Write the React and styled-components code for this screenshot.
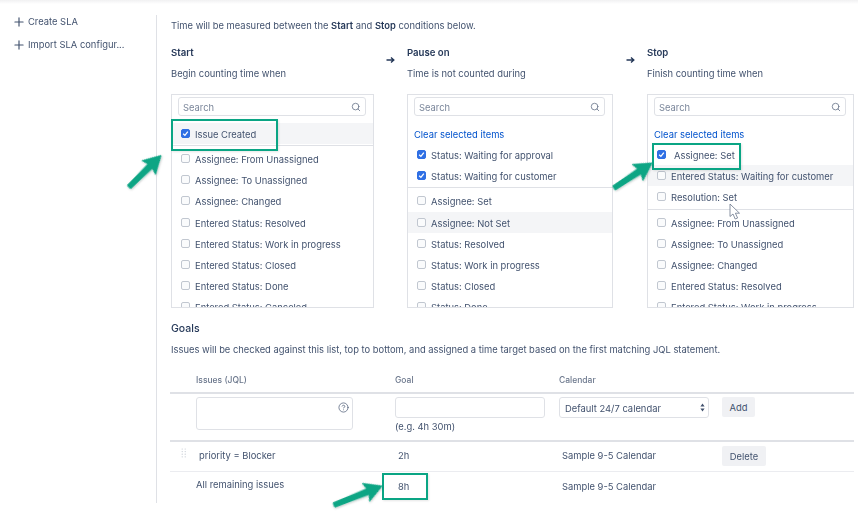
import React from 'react';
import styled, { createGlobalStyle } from 'styled-components';
import { Plus, Search, CircleHelp } from 'lucide-react';

const GlobalStyle = createGlobalStyle`
  html, body {
    margin: 0;
    padding: 0;
    background: #fff;
  }
  body {
    font-family: Inter, "Liberation Sans", sans-serif;
    font-size: 9.4px;
    color: #42526e;
    overflow: hidden;
  }
`;

const Page = styled.div`
  position: relative;
  display: flex;
  align-items: flex-start;
  width: 858px;
  height: 518px;
  padding-top: 10px;
  box-sizing: border-box;
  overflow: hidden;
  filter: blur(0.3px);
`;

const TopShade = styled.div`
  position: absolute;
  top: 0;
  left: 0;
  right: 0;
  height: 4px;
  background: linear-gradient(#f1f1f2, #fff);
`;

const Sidebar = styled.nav`
  flex: none;
  width: 156px;
  padding-left: 12px;
  box-sizing: border-box;
`;

const SideItem = styled.div`
  display: flex;
  align-items: center;
  gap: 2px;
  height: 23px;
  color: #42526e;
`;

const Main = styled.main`
  flex: none;
  width: 702px;
  height: 488px;
  margin-top: 5px;
  padding-left: 14px;
  box-sizing: border-box;
  border-left: 1px solid #dfe1e6;
`;

const Intro = styled.p`
  margin: 0;
  padding-top: 1px;
  line-height: 20px;
  strong {
    font-weight: 600;
    color: #253858;
  }
`;

const Columns = styled.div`
  display: flex;
  align-items: flex-start;
  margin-top: 10px;
`;

const Column = styled.section`
  flex: none;
  width: ${(p) => p.$width}px;
`;

const ArrowCell = styled.div`
  flex: none;
  display: flex;
  justify-content: center;
  width: ${(p) => p.$width}px;
  padding-top: 10px;
  color: #253858;
`;

const ColumnTitle = styled.h3`
  margin: 0;
  font-size: 9.6px;
  line-height: 14px;
  font-weight: 600;
  color: #253858;
`;

const ColumnText = styled.p`
  margin: 7px 0 13px;
  line-height: 14px;
`;

const ListBox = styled.div`
  height: 214px;
  box-sizing: border-box;
  border: 1px solid #dfe1e6;
  padding-top: 2px;
  overflow: hidden;
`;

const SearchBar = styled.div`
  display: flex;
  align-items: center;
  justify-content: space-between;
  height: 19px;
  margin: 0 7px 0 6px;
  padding: 0 4px 0 4px;
  box-sizing: border-box;
  border: 1px solid #dfe1e6;
  border-radius: 3px;
  color: #7a869a;
  background: #fff;
`;

// flex-centred text sits a pixel high at this font size
const InlineText = styled.span`
  padding-top: 2px;
  white-space: nowrap;
`;

const ClearLink = styled.a`
  display: block;
  margin: 12px 0 2px 6px;
  line-height: 14px;
  color: #0052cc;
`;

const SelectedGroup = styled.div`
  margin-top: ${(p) => p.$top || 0}px;
  padding-bottom: 1px;
  border-bottom: 1px solid #dfe1e6;
`;

const Options = styled.div`
  padding-top: 2px;
`;

const Option = styled.div`
  display: flex;
  align-items: center;
  height: ${(p) => p.$height || 21.2}px;
  padding-left: 9px;
  background: ${(p) => (p.$active ? '#f4f5f7' : 'transparent')};
`;

const Check = styled.span`
  flex: none;
  display: flex;
  align-items: center;
  justify-content: center;
  width: 9px;
  height: 9px;
  box-sizing: border-box;
  border-radius: 2px;
  border: 1px solid ${(p) => (p.$checked ? '#2f6fe4' : '#c1c7d0')};
  background: ${(p) => (p.$checked ? '#2f6fe4' : '#fafbfc')};
`;

const OptionLabel = styled(InlineText)`
  margin-left: ${(p) => (p.$indent ? 8 : 5)}px;
`;

const GoalsTitle = styled.h3`
  margin: 14px 0 0;
  font-size: 10.5px;
  line-height: 14px;
  font-weight: 500;
  color: #253858;
`;

const GoalsText = styled.p`
  margin: 7px 0 0;
  line-height: 14px;
`;

const Table = styled.div`
  margin: 15px 0 0 -1px;
  width: 684px;
`;

const Row = styled.div`
  display: grid;
  grid-template-columns: 26px 199px 164px 163px 1fr;
  align-items: start;
  height: ${(p) => p.$height}px;
  padding-top: ${(p) => p.$pad || 0}px;
  box-sizing: border-box;
  border-bottom: ${(p) => p.$line || 0}px solid ${(p) => (p.$line === 1 ? '#ebecf0' : '#dfe1e6')};
`;

const HeadCell = styled.div`
  padding-top: 1px;
  font-size: 8.5px;
  line-height: 14px;
  font-weight: 500;
  color: #6b778c;
  grid-column: ${(p) => p.$col};
`;

const Cell = styled.div`
  grid-column: ${(p) => p.$col};
  padding-left: ${(p) => p.$inset || 0}px;
  padding-top: ${(p) => p.$top || 0}px;
  line-height: 14px;
  color: #42526e;
  white-space: nowrap;
`;

const Handle = styled.div`
  display: flex;
  justify-content: center;
  padding: 2px 0 0 2px;
`;

const JqlField = styled.div`
  display: flex;
  justify-content: flex-end;
  width: 157px;
  height: 33px;
  padding: 4px 3px 0 0;
  box-sizing: border-box;
  border: 1px solid #dfe1e6;
  border-radius: 3px;
  color: #42526e;
`;

const GoalField = styled.div`
  width: 150px;
  height: 21px;
  box-sizing: border-box;
  border: 1px solid #dfe1e6;
  border-radius: 3px;
`;

const GoalHint = styled.div`
  padding-top: 1px;
  line-height: 15px;
`;

const CalendarSelect = styled.div`
  display: flex;
  align-items: center;
  justify-content: space-between;
  width: 150px;
  height: 21px;
  padding: 0 3px 0 5px;
  box-sizing: border-box;
  border: 1px solid #dfe1e6;
  border-radius: 3px;
  color: #42526e;
`;

const Button = styled.div`
  display: inline-flex;
  align-items: center;
  justify-content: center;
  width: ${(p) => p.$width}px;
  height: 20px;
  border-radius: 2px;
  background: #f0f1f4;
  color: #42526e;
`;

const Highlight = styled.div`
  position: absolute;
  left: ${(p) => p.$x}px;
  top: ${(p) => p.$y}px;
  width: ${(p) => p.$w}px;
  height: ${(p) => p.$h}px;
  box-sizing: border-box;
  border: 2px solid #0aa584;
  box-shadow: 1px 1px 2px rgba(0, 0, 0, 0.1);
`;

const Overlay = styled.svg`
  position: absolute;
  left: 0;
  top: 0;
  pointer-events: none;
`;

function SmallArrow() {
  return (
    <svg width="9" height="8" viewBox="0 0 9 8">
      <path d="M0.5 4H7.5M5 1.5L7.8 4L5 6.5" fill="none" stroke="currentColor" strokeWidth="1.4" />
    </svg>
  );
}

function Box({ checked }) {
  return (
    <Check $checked={checked}>
      {checked && (
        <svg width="7" height="7" viewBox="0 0 6 6">
          <path d="M1 3.2L2.5 4.6L5 1.4" fill="none" stroke="#fff" strokeWidth="1.1" />
        </svg>
      )}
    </Check>
  );
}

function Item({ label, checked, active, height, indent }) {
  return (
    <Option $active={active} $height={height}>
      <Box checked={checked} />
      <OptionLabel $indent={indent}>{label}</OptionLabel>
    </Option>
  );
}

function SearchField() {
  return (
    <SearchBar>
      <InlineText>Search</InlineText>
      <Search size={10} strokeWidth={2} color="#6b778c" />
    </SearchBar>
  );
}

function GreenArrow({ x1, y1, x2, y2 }) {
  const angle = (Math.atan2(y2 - y1, x2 - x1) * 180) / Math.PI;
  const len = Math.hypot(x2 - x1, y2 - y1);
  return (
    <g transform={`translate(${x1} ${y1}) rotate(${angle})`}>
      <path
        d={`M0 -2.2L${len - 15} -3L${len - 17} -9.5L${len} 0L${len - 17} 9.5L${len - 15} 3L0 2.2Z`}
        fill="#0aa584"
        stroke="#0aa584"
        strokeWidth="1"
        strokeLinejoin="round"
        filter="url(#arrowShadow)"
      />
    </g>
  );
}

export default function App() {
  return (
    <>
      <GlobalStyle />
      <Page>
        <TopShade />
        <Sidebar>
          <SideItem>
            <Plus size={14} strokeWidth={2} />
            Create SLA
          </SideItem>
          <SideItem>
            <Plus size={14} strokeWidth={2} />
            Import SLA configur...
          </SideItem>
        </Sidebar>

        <Main>
          <Intro>
            Time will be measured between the <strong>Start</strong> and <strong>Stop</strong> conditions below.
          </Intro>

          <Columns>
            <Column $width={203}>
              <ColumnTitle>Start</ColumnTitle>
              <ColumnText>Begin counting time when</ColumnText>
              <ListBox>
                <SearchField />
                <SelectedGroup $top={7}>
                  <Item label="Issue Created" checked active height={21} />
                </SelectedGroup>
                <Options>
                  <Item label="Assignee: From Unassigned" />
                  <Item label="Assignee: To Unassigned" />
                  <Item label="Assignee: Changed" />
                  <Item label="Entered Status: Resolved" />
                  <Item label="Entered Status: Work in progress" />
                  <Item label="Entered Status: Closed" />
                  <Item label="Entered Status: Done" />
                  <Item label="Entered Status: Canceled" />
                </Options>
              </ListBox>
            </Column>
            <ArrowCell $width={33}>
              <SmallArrow />
            </ArrowCell>
            <Column $width={206}>
              <ColumnTitle>Pause on</ColumnTitle>
              <ColumnText>Time is not counted during</ColumnText>
              <ListBox>
                <SearchField />
                <ClearLink>Clear selected items</ClearLink>
                <SelectedGroup>
                  <Item label="Status: Waiting for approval" checked />
                  <Item label="Status: Waiting for customer" checked />
                </SelectedGroup>
                <Options>
                  <Item label="Assignee: Set" />
                  <Item label="Assignee: Not Set" active />
                  <Item label="Status: Resolved" />
                  <Item label="Status: Work in progress" />
                  <Item label="Status: Closed" />
                  <Item label="Status: Done" />
                </Options>
              </ListBox>
            </Column>
            <ArrowCell $width={34}>
              <SmallArrow />
            </ArrowCell>
            <Column $width={207}>
              <ColumnTitle>Stop</ColumnTitle>
              <ColumnText>Finish counting time when</ColumnText>
              <ListBox>
                <SearchField />
                <ClearLink>Clear selected items</ClearLink>
                <SelectedGroup>
                  <Item label="Assignee: Set" checked indent />
                  <Item label="Entered Status: Waiting for customer" active />
                  <Item label="Resolution: Set" />
                </SelectedGroup>
                <Options>
                  <Item label="Assignee: From Unassigned" />
                  <Item label="Assignee: To Unassigned" />
                  <Item label="Assignee: Changed" />
                  <Item label="Entered Status: Resolved" />
                  <Item label="Entered Status: Work in progress" />
                </Options>
              </ListBox>
            </Column>
          </Columns>

          <GoalsTitle>Goals</GoalsTitle>
          <GoalsText>
            Issues will be checked against this list, top to bottom, and assigned a time target based on the first matching JQL statement.
          </GoalsText>

          <Table>
            <Row $height={22} $line={2}>
              <HeadCell $col={2}>Issues (JQL)</HeadCell>
              <HeadCell $col={3}>Goal</HeadCell>
              <HeadCell $col={4}>Calendar</HeadCell>
            </Row>
            <Row $height={48} $line={2} $pad={3}>
              <Cell $col={2}>
                <JqlField>
                  <CircleHelp size={11} strokeWidth={1.5} />
                </JqlField>
              </Cell>
              <Cell $col={3}>
                <GoalField />
                <GoalHint>(e.g. 4h 30m)</GoalHint>
              </Cell>
              <Cell $col={4}>
                <CalendarSelect>
                  <InlineText>Default 24/7 calendar</InlineText>
                  <svg width="5" height="9" viewBox="0 0 5 9">
                    <path d="M2.5 0.5L4.6 3.5H0.4ZM2.5 8.5L0.4 5.5H4.6Z" fill="#42526e" />
                  </svg>
                </CalendarSelect>
              </Cell>
              <Cell $col={5}>
                <Button $width={33}><InlineText>Add</InlineText></Button>
              </Cell>
            </Row>
            <Row $height={30} $line={1} $pad={4}>
              <Handle>
                <svg width="6" height="10" viewBox="0 0 6 10">
                  <g fill="#c1c7d0">
                    {[1, 3.6, 6.2, 8.8].map((y) => (
                      <React.Fragment key={y}>
                        <circle cx="1.2" cy={y} r="0.6" />
                        <circle cx="4.2" cy={y} r="0.6" />
                      </React.Fragment>
                    ))}
                  </g>
                </svg>
              </Handle>
              <Cell $col={2} $inset={3} $top={3}>priority = Blocker</Cell>
              <Cell $col={3} $inset={3} $top={3}>2h</Cell>
              <Cell $col={4} $inset={3} $top={3}>Sample 9-5 Calendar</Cell>
              <Cell $col={5}>
                <Button $width={44}><InlineText>Delete</InlineText></Button>
              </Cell>
            </Row>
            <Row $height={30}>
              <Cell $col={2} $top={6}>All remaining issues</Cell>
              <Cell $col={3} $inset={3} $top={8}>8h</Cell>
              <Cell $col={4} $inset={3} $top={8}>Sample 9-5 Calendar</Cell>
            </Row>
          </Table>
        </Main>

        <Highlight $x={171} $y={119} $w={107} $h={32} />
        <Highlight $x={652} $y={143} $w={89} $h={27} />
        <Highlight $x={382} $y={473} $w={46} $h={27} />

        <Overlay width="858" height="518" viewBox="0 0 858 518">
          <defs>
            <filter id="arrowShadow" x="-20%" y="-40%" width="140%" height="180%">
              <feDropShadow dx="0" dy="1" stdDeviation="0.8" floodColor="#000" floodOpacity="0.25" />
            </filter>
          </defs>
          <GreenArrow x1={129} y1={187} x2={161} y2={155.5} />
          <GreenArrow x1={614} y1={188} x2={652} y2={163} />
          <GreenArrow x1={334} y1={505} x2={382} y2={486} />
          <path
            d="M730 204V216.5L733 214L735.2 219L737.6 218L735.4 213.2H739.5Z"
            fill="#fff"
            stroke="#6b778c"
            strokeWidth="0.8"
            strokeLinejoin="round"
          />
        </Overlay>
      </Page>
    </>
  );
}
